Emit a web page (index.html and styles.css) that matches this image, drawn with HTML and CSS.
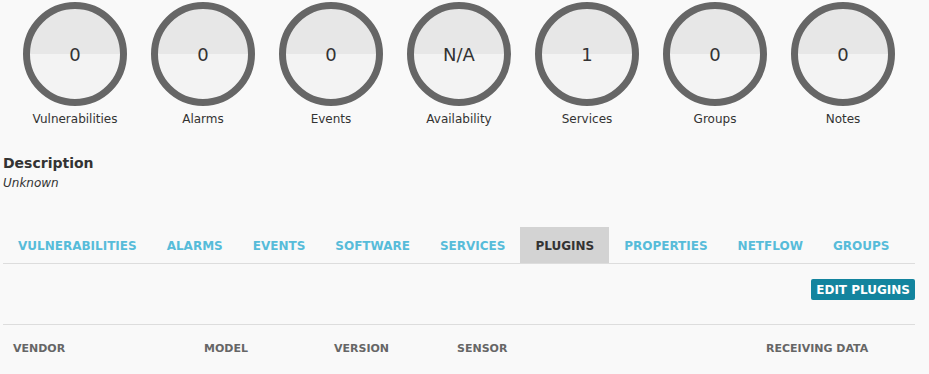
FILE: index.html
```html
<!DOCTYPE html>
<html>
<head>
<meta charset="utf-8">
<link rel="stylesheet" href="styles.css">
</head>
<body>
<div class="page">
  <div class="stats">
    <div class="stat"><div class="circle"><span>0</span></div><div class="label">Vulnerabilities</div></div>
    <div class="stat"><div class="circle"><span>0</span></div><div class="label">Alarms</div></div>
    <div class="stat"><div class="circle"><span>0</span></div><div class="label">Events</div></div>
    <div class="stat"><div class="circle"><span>N/A</span></div><div class="label">Availability</div></div>
    <div class="stat"><div class="circle"><span>1</span></div><div class="label">Services</div></div>
    <div class="stat"><div class="circle"><span>0</span></div><div class="label">Groups</div></div>
    <div class="stat"><div class="circle"><span>0</span></div><div class="label">Notes</div></div>
  </div>
  <div class="desc">
    <div class="desc-title">Description</div>
    <div class="desc-text">Unknown</div>
  </div>
  <div class="tabs">
    <div class="tab">VULNERABILITIES</div>
    <div class="tab">ALARMS</div>
    <div class="tab">EVENTS</div>
    <div class="tab">SOFTWARE</div>
    <div class="tab">SERVICES</div>
    <div class="tab active">PLUGINS</div>
    <div class="tab">PROPERTIES</div>
    <div class="tab">NETFLOW</div>
    <div class="tab">GROUPS</div>
  </div>
  <div class="actions">
    <button class="btn">EDIT PLUGINS</button>
  </div>
  <div class="thead">
    <div class="th">VENDOR</div>
    <div class="th">MODEL</div>
    <div class="th">VERSION</div>
    <div class="th">SENSOR</div>
    <div class="th">RECEIVING DATA</div>
  </div>
</div>
</body>
</html>
```

FILE: styles.css
```css
html, body {
  margin: 0;
  padding: 0;
  background: #f9f9f9;
  font-family: "DejaVu Sans", sans-serif;
  color: #333;
  overflow: hidden;
}
.page {
  width: 912px;
  margin-left: 3px;
}
.stats {
  display: flex;
  padding-left: 8px;
  padding-top: 2px;
}
.stat {
  width: 128px;
  display: flex;
  flex-direction: column;
  align-items: center;
}
.circle {
  width: 90px;
  height: 90px;
  border: 7px solid #666;
  border-radius: 50%;
  background: linear-gradient(to bottom, #e7e7e7 50%, #f3f3f3 50%);
  display: flex;
  align-items: center;
  justify-content: center;
  font-size: 18px;
  color: #333;
}
.label {
  margin-top: 6px;
  font-size: 12px;
  line-height: 15px;
  color: #333;
}
.desc {
  margin-top: 27px;
}
.desc-title {
  font-weight: bold;
  font-size: 14px;
  line-height: 18px;
}
.desc-text {
  margin-top: 2px;
  font-style: italic;
  font-size: 12px;
  line-height: 18px;
}
.tabs {
  display: flex;
  margin-top: 35px;
  border-bottom: 1px solid #ddd;
}
.tab {
  height: 36px;
  line-height: 38px;
  padding: 0 15px;
  font-size: 12px;
  font-weight: bold;
  color: #57bcd9;
}
.tab.active {
  background: #d3d3d3;
  color: #333;
}
.actions {
  display: flex;
  justify-content: flex-end;
  padding-top: 15px;
  padding-bottom: 24px;
  border-bottom: 1px solid #ddd;
}
.btn {
  height: 21px;
  padding: 0 5px;
  border: none;
  border-radius: 2px;
  background: #13849e;
  color: #fff;
  font-family: "DejaVu Sans", sans-serif;
  font-weight: bold;
  font-size: 12px;
}
.thead {
  display: grid;
  grid-template-columns: 191px 130px 123px 309px 159px;
  padding-top: 17px;
}
.th {
  padding-left: 10px;
  font-size: 11px;
  font-weight: bold;
  color: #666;
  line-height: 14px;
}
```
